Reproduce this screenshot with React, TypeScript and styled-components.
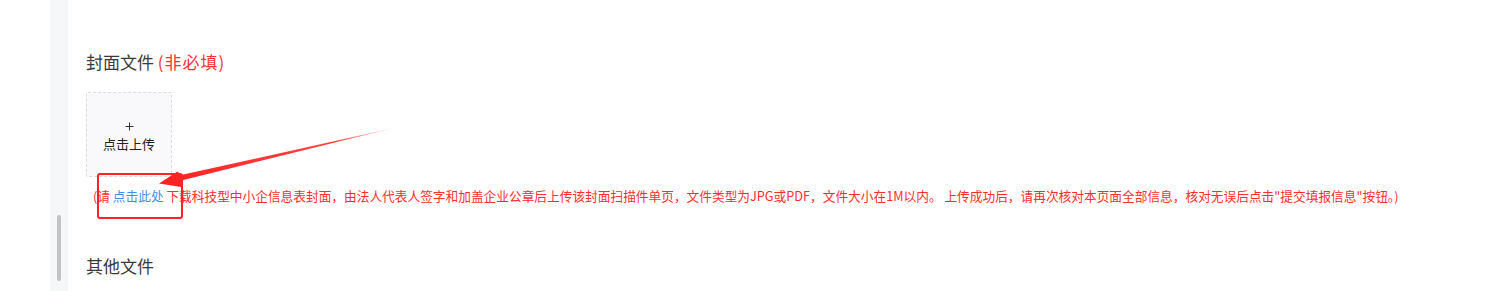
import React from "react";
import styled, { createGlobalStyle } from "styled-components";

const GlobalStyle = createGlobalStyle`
  html, body {
    margin: 0;
    padding: 0;
    background: #fff;
  }
  body {
    font-family: "Noto Sans CJK SC", "Noto Sans", sans-serif;
  }
`;

const Page = styled.div`
  position: relative;
  width: 1497px;
  height: 291px;
  overflow: hidden;
  display: flex;
  background: #fff;
`;

const Gutter = styled.div`
  width: 50px;
  flex-shrink: 0;
`;

const Rail = styled.div`
  width: 18px;
  flex-shrink: 0;
  background: #f6f7f9;
  display: flex;
  justify-content: center;
  padding-top: 215px;
  box-sizing: border-box;
`;

const Thumb = styled.div`
  width: 4px;
  height: 66px;
  border-radius: 2px;
  background: #c3c3c3;
`;

const Content = styled.div`
  flex: 1;
  padding: 50px 0 0 18px;
  display: flex;
  flex-direction: column;
  align-items: flex-start;
`;

const SectionTitle = styled.div<{ $gap?: number }>`
  margin-top: ${(p) => p.$gap ?? 0}px;
  font-size: 17px;
  line-height: 24px;
  color: #3a3a3a;
`;

const Optional = styled.span`
  color: #ff2f3d;
  letter-spacing: 1px;
`;

const UploadBox = styled.div`
  margin-top: 18px;
  width: 86px;
  height: 85px;
  box-sizing: border-box;
  border: 1px dashed #dcdde0;
  border-radius: 2px;
  background: #f9f9fb;
  display: flex;
  flex-direction: column;
  align-items: center;
  justify-content: center;
  gap: 4px;
  padding-top: 5px;
  color: #222;
  font-size: 13px;
`;

const PlusIcon = styled.svg`
  display: block;
  margin-left: 1px;
`;

const UploadLabel = styled.div`
  line-height: 18px;
`;

const Hint = styled.div`
  margin-top: 9px;
  padding-left: 7px;
  font-size: 12.7px;
  line-height: 20px;
  color: #ff2f2f;
  white-space: nowrap;
`;

const Link = styled.span`
  color: #3f8fe9;
`;

const Highlight = styled.div`
  position: absolute;
  left: 97px;
  top: 173px;
  width: 86px;
  height: 46px;
  box-sizing: border-box;
  border: 2.5px solid #ff2424;
  border-radius: 3px;
`;

const ArrowLayer = styled.svg`
  position: absolute;
  left: 0;
  top: 0;
  pointer-events: none;
`;

export default function App() {
  return (
    <>
      <GlobalStyle />
      <Page>
        <Gutter />
        <Rail>
          <Thumb />
        </Rail>
        <Content>
          <SectionTitle>
            封面文件 <Optional>(非必填)</Optional>
          </SectionTitle>
          <UploadBox>
            <PlusIcon width="9" height="9" viewBox="0 0 9 9">
              <path d="M4.5 0.5V8.5M0.5 4.5H8.5" stroke="#333" strokeWidth="1" />
            </PlusIcon>
            <UploadLabel>点击上传</UploadLabel>
          </UploadBox>
          <Hint>
            (请 <Link>点击此处</Link> 下载科技型中小企信息表封面，由法人代表人签字和加盖企业公章后上传该封面扫描件单页，文件类型为JPG或PDF，文件大小在1M以内。 上传成功后，请再次核对本页面全部信息，核对无误后点击"提交填报信息"按钮。)
          </Hint>
          <SectionTitle $gap={48}>其他文件</SectionTitle>
        </Content>
        <Highlight />
        <ArrowLayer width="1497" height="291" viewBox="0 0 1497 291">
          <defs>
            <linearGradient id="shaft" x1="400" y1="127" x2="180" y2="178" gradientUnits="userSpaceOnUse">
              <stop offset="0" stopColor="#ff2424" stopOpacity="0.05" />
              <stop offset="0.3" stopColor="#ff2424" stopOpacity="0.85" />
              <stop offset="1" stopColor="#ff2424" />
            </linearGradient>
          </defs>
          <polygon points="400,126.5 180.2,180.8 178.8,175.6" fill="url(#shaft)" />
          <polygon points="159,183.5 177.5,171.5 183,177 181,187" fill="#ff2424" />
        </ArrowLayer>
      </Page>
    </>
  );
}
